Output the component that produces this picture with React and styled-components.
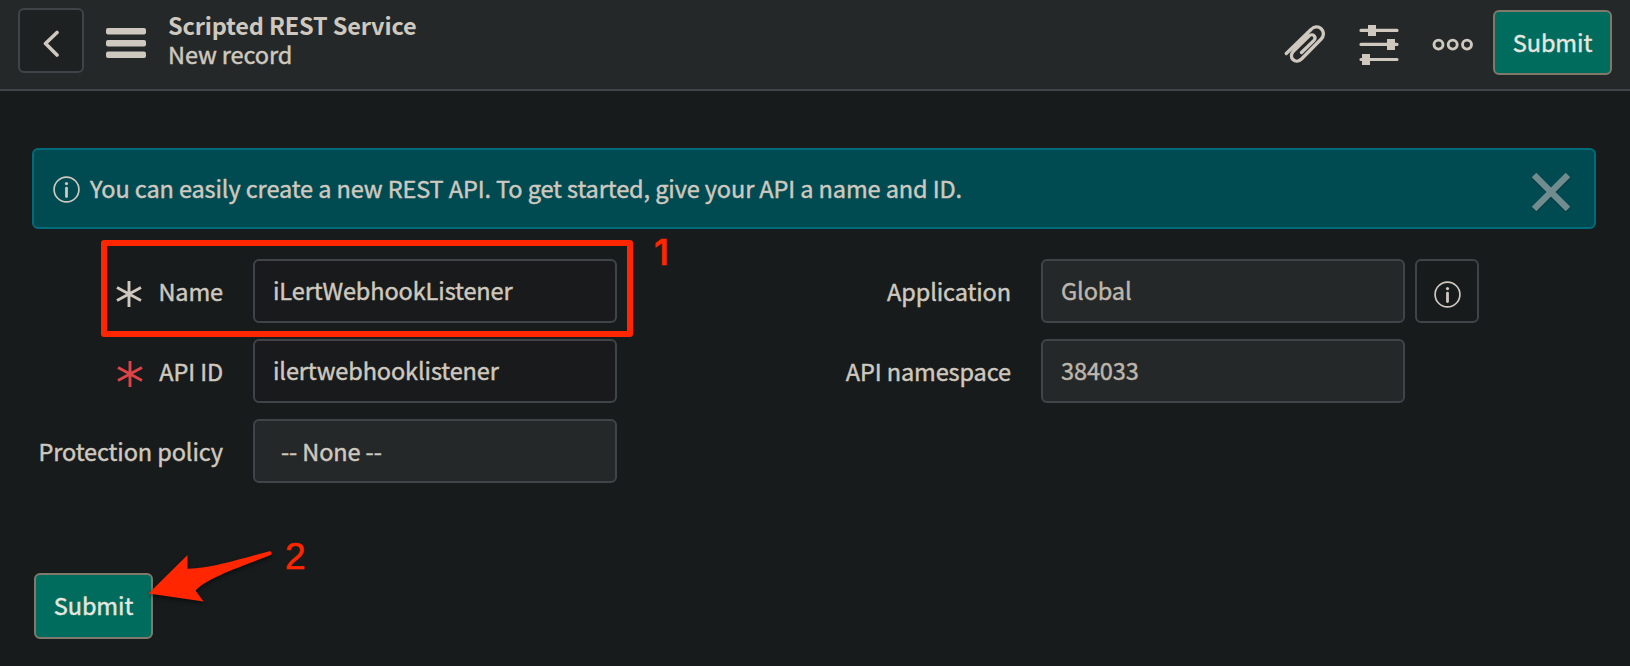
import React from "react";
import styled, { createGlobalStyle } from "styled-components";

const Global = createGlobalStyle`
  *, *::before, *::after { box-sizing: border-box; }
  body {
    margin: 0;
    background: #171b1c;
    color: #cfc8bf;
    font-family: "Noto Sans CJK SC", "Noto Sans", sans-serif;
    font-size: 23.5px;
    line-height: 30px;
    letter-spacing: -0.1px;
    -webkit-text-stroke: 0.45px currentColor;
  }
  button, input { font: inherit; color: inherit; letter-spacing: inherit; }
  svg { display: block; flex: none; }
`;

const Page = styled.div`
  position: relative;
  width: 1630px;
  height: 666px;
  overflow: hidden;
`;

const Header = styled.header`
  display: flex;
  align-items: flex-start;
  height: 91px;
  padding: 8px 18px 0;
  background: #252829;
  border-bottom: 2px solid #404347;
`;

const BackButton = styled.button`
  display: flex;
  align-items: center;
  justify-content: center;
  width: 66px;
  height: 65px;
  padding: 6px 1px 0 0;
  background: #1e2122;
  border: 2px solid #404347;
  border-radius: 6px;
`;

const MenuIcon = styled.svg`
  margin: 20px 22px 0 22px;
`;

const Titles = styled.div`
  flex: 1;
  padding-top: 3px;
  line-height: 29px;
  white-space: nowrap;
`;

const Title = styled.div`
  font-weight: 700;
  letter-spacing: -0.17px;
  -webkit-text-stroke: 0;
`;

const Tools = styled.div`
  display: flex;
  align-items: flex-start;
  padding-top: 2px;
`;

const ToolIcon = styled.svg`
  margin: 13px ${(p) => p.$gap}px 0 0;
`;

const SubmitButton = styled.button`
  width: 119px;
  height: ${(p) => p.$height}px;
  padding: 0 0 2px;
  color: #e6e6df;
  background: #006c5d;
  border: 2px solid #80786b;
  border-radius: 6px;
`;

const Main = styled.main`
  padding: 57px 34px 0 32px;
`;

const Banner = styled.section`
  display: flex;
  align-items: center;
  height: 81px;
  padding: 2px 24px 0 19px;
  background: #004a52;
  border: 2px solid #006b7a;
  border-radius: 6px;
`;

const BannerText = styled.p`
  flex: 1;
  margin: 0 0 4px 10px;
  white-space: nowrap;
`;

const CloseIcon = styled.svg`
  margin-top: 4px;
`;

const Form = styled.form`
  display: grid;
  grid-template-columns: 788px 1fr;
  padding-top: 30px;
`;

const Column = styled.div`
  display: flex;
  flex-direction: column;
  gap: 16px;
`;

const Row = styled.div`
  display: grid;
  grid-template-columns: 191px 364px 64px;
  align-items: center;
  column-gap: 30px;
  height: 64px;
`;

const Label = styled.label`
  display: flex;
  align-items: center;
  justify-content: flex-end;
  gap: 16px;
  white-space: nowrap;

  svg { margin: 6px 0 0; }
`;

const Field = styled.div`
  display: flex;
  align-items: center;
  width: 364px;
  height: 64px;
  padding: 0 ${(p) => (p.$select ? 26 : 18)}px ${(p) => (p.$select ? 0 : 2)}px;
  color: ${(p) => (p.$readOnly ? "#bdb6ab" : "#cfc8bf")};
  background: ${(p) => (p.$filled ? "#252829" : "#181a1b")};
  border: 2px solid #404347;
  border-radius: 6px;
`;

const InfoButton = styled.button`
  display: flex;
  align-items: center;
  justify-content: center;
  width: 64px;
  height: 64px;
  margin-left: -20px;
  padding: 6px 0 0 1px;
  background: transparent;
  border: 2px solid #404347;
  border-radius: 6px;
`;

const Footer = styled.footer`
  padding: 90px 0 0 2px;
`;

const Highlight = styled.div`
  position: absolute;
  left: 101px;
  top: 240px;
  width: 532px;
  height: 97px;
  border: 6px solid #ff2600;
  border-radius: 3px;
`;

const Step = styled.span`
  position: absolute;
  left: ${(p) => p.$x}px;
  top: ${(p) => p.$y}px;
  color: #ff2600;
  font: ${(p) => p.$font};
  -webkit-text-stroke: 0.6px #ff2600;
`;

const Arrow = styled.svg`
  position: absolute;
  left: 140px;
  top: 545px;
  filter: drop-shadow(0 2px 2px rgba(0, 0, 0, 0.5));
`;

const InfoIcon = () => (
  <svg width="27" height="27" viewBox="0 0 27 27" fill="none" stroke="#cfc8bf">
    <circle cx="13.5" cy="13.5" r="12.4" strokeWidth="1.7" />
    <path d="M13.5 12.2v8.4" strokeWidth="2.8" strokeLinecap="round" />
    <circle cx="13.5" cy="7.6" r="1.6" fill="#cfc8bf" stroke="none" />
  </svg>
);

const Required = ({ color }) => (
  <svg width="26" height="26" viewBox="0 0 26 26" stroke={color} strokeWidth="2.9">
    <path d="M13 0v26M1 6.5l24 13M25 6.5l-24 13" />
  </svg>
);

const Submit = ({ height = 65 }) => (
  <SubmitButton type="button" $height={height}>Submit</SubmitButton>
);

export default function App() {
  return (
    <>
      <Global />
      <Page>
        <Header>
          <BackButton aria-label="Back">
            <svg width="18" height="28" viewBox="0 0 18 28" fill="none" stroke="#cfc8bf" strokeWidth="3.6" strokeLinecap="round" strokeLinejoin="round">
              <path d="M15 2.500L3.500 13.500l11.500 11.500" />
            </svg>
          </BackButton>
          <MenuIcon width="40" height="30" viewBox="0 0 40 30" fill="#cfc8bf">
            <rect width="40" height="6.500" rx="2" />
            <rect y="12" width="40" height="6.500" rx="2" />
            <rect y="23.500" width="40" height="6.500" rx="2" />
          </MenuIcon>
          <Titles>
            <Title>Scripted REST Service</Title>
            <div>New record</div>
          </Titles>
          <Tools>
            <ToolIcon $gap={34} width="42" height="42" viewBox="0 0 42 42" fill="none" stroke="#cfc8bf" strokeWidth="3.300" strokeLinecap="round">
              <path d="M3.300 30.500L28 6.500C30.800 3.400 35.300 3 38.200 5.700s2.900 7.200 0 10.300L18.500 36c-2.600 2.600-6.200 2.800-8.500.5s-2-5.700.6-8.300L26 13c1.600-1.500 3.700-1.600 5-.3s1.200 3.300-.3 4.900L18.500 29.500" />
            </ToolIcon>
            <ToolIcon $gap={33} width="40" height="42" viewBox="0 0 40 42" fill="#cfc8bf">
              <path d="M2 7.400h36M2 21.400h36M2 36.500h36" stroke="#cfc8bf" strokeWidth="3.200" strokeLinecap="round" />
              <path d="M9 2h8v11h-8zM28 16h8v11h-8zM3 31h8v11h-8z" />
            </ToolIcon>
            <ToolIcon $gap={19} width="42" height="42" viewBox="0 0 42 42" fill="none" stroke="#cfc8bf" strokeWidth="2.900">
              <circle cx="6.500" cy="21.600" r="4.500" />
              <circle cx="20.700" cy="21.600" r="4.500" />
              <circle cx="35" cy="21.600" r="4.500" />
            </ToolIcon>
            <Submit />
          </Tools>
        </Header>
        <Main>
          <Banner>
            <InfoIcon />
            <BannerText>You can easily create a new REST API. To get started, give your API a name and ID.</BannerText>
            <CloseIcon width="38" height="42" viewBox="0 0 38 42">
              <path d="M2 5.500l34 34M36 5.500L2 39.500" stroke="#073a40" strokeWidth="6.500" />
              <path d="M2 4l34 34M36 4L2 38" stroke="#718c8e" strokeWidth="6.500" />
            </CloseIcon>
          </Banner>
          <Form>
            <Column>
              <Row>
                <Label><Required color="#cfc8bf" />Name</Label>
                <Field>iLertWebhookListener</Field>
              </Row>
              <Row>
                <Label><Required color="#de4348" />API ID</Label>
                <Field>ilertwebhooklistener</Field>
              </Row>
              <Row>
                <Label>Protection policy</Label>
                <Field $filled $select>-- None --</Field>
              </Row>
            </Column>
            <Column>
              <Row>
                <Label>Application</Label>
                <Field $filled $readOnly>Global</Field>
                <InfoButton type="button" aria-label="Application details"><InfoIcon /></InfoButton>
              </Row>
              <Row>
                <Label>API namespace</Label>
                <Field $filled $readOnly>384033</Field>
              </Row>
            </Column>
          </Form>
          <Footer><Submit height={66} /></Footer>
        </Main>
        <Highlight />
        <Step $x={654} $y={231} $font='500 36px/42px Inter, sans-serif'>1</Step>
        <Step $x={285} $y={536} $font='37px/42px "Liberation Sans", sans-serif'>2</Step>
        <Arrow width="140" height="65" viewBox="0 0 140 65" fill="#ff2600">
          <path d="M8.500 48.500L47.500 10V23.700C68 24 100 14 129.500 6.300c2.300-.4 3 2.800 1 3.600C105 20.500 68 32 55.500 45.500L63.500 56.500z" />
        </Arrow>
      </Page>
    </>
  );
}
